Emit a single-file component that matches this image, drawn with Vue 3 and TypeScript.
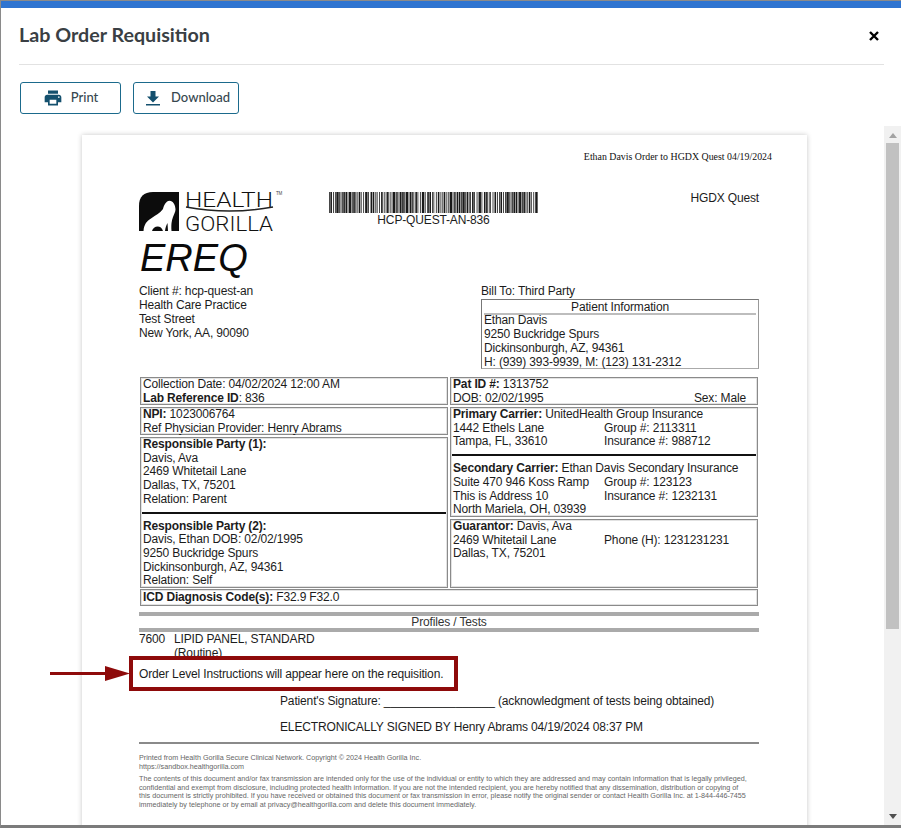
<template>
  <div class="modal">
    <div class="topbar"></div>
    <header class="head">
      <h1>Lab Order Requisition</h1>
      <button class="close" type="button" aria-label="Close">
        <svg viewBox="0 0 10 10" width="10" height="10"><path d="M1 1l8 8M9 1l-8 8" stroke="#000" stroke-width="2.4" /></svg>
      </button>
    </header>
    <div class="actions">
      <button class="btn print" type="button">
        <svg viewBox="0 0 24 24" width="20" height="20"><path d="M19 8H5c-1.66 0-3 1.34-3 3v6h4v4h12v-4h4v-6c0-1.66-1.34-3-3-3zm-3 11H8v-5h8v5zm3-7c-.55 0-1-.45-1-1s.45-1 1-1 1 .45 1 1-.45 1-1 1zm-1-9H6v4h12V3z" /></svg>
        <span class="label">Print</span>
      </button>
      <button class="btn download" type="button">
        <svg viewBox="0 0 14 15" width="14" height="15"><path d="M4.500 0h5v5.500H13L7 11.500 1 5.500h3.500zM0 13h14v1.500H0z" /></svg>
        <span class="label">Download</span>
      </button>
    </div>

    <div class="viewer">
      <div class="stage">
        <article class="doc">
          <div class="doc-title">Ethan Davis Order to HGDX Quest 04/19/2024</div>

          <div class="brand-row">
            <svg class="logo" viewBox="0 0 145 41" width="145" height="41">
              <path d="M1 40V15Q1 1 15 1H41V40Z" fill="#0c0c0c" />
              <path d="M5.500 40C6 33 9 30 13 27.500C18 24 22 22 25 18C26 14 28 10 31.500 9.700C35 9.700 37.500 14 37.500 18.500C37.500 21 36 23 35 26C34 29 33 32 33.500 40Z" fill="#fff" />
              <path d="M14 40C15 35 23 33 25 40ZM27 40C27.500 36 28.500 34 29.500 32L30 40Z" fill="#0c0c0c" />
              <text x="47" y="15.5" class="logo-word" textLength="88" lengthAdjust="spacingAndGlyphs">HEALTH</text>
              <path d="M48 16Q91 24 135 16" fill="none" stroke="#222" stroke-width="1.4" />
              <text x="47" y="39.5" class="logo-word" textLength="88" lengthAdjust="spacingAndGlyphs">GORILLA</text>
              <text x="138" y="4" class="logo-tm">TM</text>
            </svg>
            <div class="barcode">
              <svg viewBox="0 0 209 21" width="209" height="21" preserveAspectRatio="none">
                <rect v-for="(bar, i) in bars" :key="i" :x="bar.x" y="0" :width="bar.w" height="21" fill="#1a1a1a" />
              </svg>
              <div class="barcode-label">HCP-QUEST-AN-836</div>
            </div>
            <div class="lab-name">HGDX Quest</div>
          </div>

          <div class="ereq">EREQ</div>

          <div class="parties">
            <div class="client">
              <div>Client #: hcp-quest-an</div>
              <div>Health Care Practice</div>
              <div>Test Street</div>
              <div>New York, AA, 90090</div>
            </div>
            <div class="bill">
              <div class="bill-to">Bill To: Third Party</div>
              <div class="patient">
                <div class="patient-head">Patient Information</div>
                <div>Ethan Davis</div>
                <div>9250 Buckridge Spurs</div>
                <div>Dickinsonburgh, AZ, 94361</div>
                <div>H: (939) 393-9939, M: (123) 131-2312</div>
              </div>
            </div>
          </div>

          <div class="grid">
            <div class="col">
              <section class="cell h28">
                <div>Collection Date: 04/02/2024 12:00 AM</div>
                <div><b>Lab Reference ID</b>: 836</div>
              </section>
              <section class="cell h28">
                <div><b>NPI:</b> 1023006764</div>
                <div>Ref Physician Provider: Henry Abrams</div>
              </section>
              <section class="cell h151">
                <div><b>Responsible Party (1):</b></div>
                <div>Davis, Ava</div>
                <div>2469 Whitetail Lane</div>
                <div>Dallas, TX, 75201</div>
                <div>Relation: Parent</div>
                <hr class="black" />
                <div><b>Responsible Party (2):</b></div>
                <div>Davis, Ethan DOB: 02/02/1995</div>
                <div>9250 Buckridge Spurs</div>
                <div>Dickinsonburgh, AZ, 94361</div>
                <div>Relation: Self</div>
              </section>
            </div>
            <div class="col">
              <section class="cell h28">
                <div><b>Pat ID #:</b> 1313752</div>
                <div class="split"><span>DOB: 02/02/1995</span><span class="sex">Sex: Male</span></div>
              </section>
              <section class="cell h110">
                <div><b>Primary Carrier:</b> UnitedHealth Group Insurance</div>
                <div class="pair"><span>1442 Ethels Lane</span><span>Group #: 2113311</span></div>
                <div class="pair"><span>Tampa, FL, 33610</span><span>Insurance #: 988712</span></div>
                <hr class="black" />
                <div><b>Secondary Carrier:</b> Ethan Davis Secondary Insurance</div>
                <div class="pair"><span>Suite 470 946 Koss Ramp</span><span>Group #: 123123</span></div>
                <div class="pair"><span>This is Address 10</span><span>Insurance #: 1232131</span></div>
                <div>North Mariela, OH, 03939</div>
              </section>
              <section class="cell h69">
                <div><b>Guarantor:</b> Davis, Ava</div>
                <div class="pair"><span>2469 Whitetail Lane</span><span>Phone (H): 1231231231</span></div>
                <div>Dallas, TX, 75201</div>
              </section>
            </div>
            <section class="cell wide"><b>ICD Diagnosis Code(s):</b> F32.9 F32.0</section>
          </div>

          <div class="profiles">Profiles / Tests</div>
          <div class="test">
            <span class="code">7600</span>
            <span>LIPID PANEL, STANDARD<br />(Routine)</span>
          </div>

          <div class="instructions">
            Order Level Instructions will appear here on the requisition.
            <svg class="arrow" viewBox="0 0 80 15" width="80" height="15">
              <path d="M0 6H55V0L80 7.500 55 15V9H0Z" fill="#8e0a0a" />
            </svg>
          </div>

          <div class="signature">Patient's Signature: _________________ (acknowledgment of tests being obtained)</div>
          <div class="signed">ELECTRONICALLY SIGNED BY Henry Abrams 04/19/2024 08:37 PM</div>

          <footer class="fine">
            <p>Printed from Health Gorilla Secure Clinical Network. Copyright © 2024 Health Gorilla Inc.<br />https://sandbox.healthgorilla.com</p>
            <p>The contents of this document and/or fax transmission are intended only for the use of the individual or entity to which they are addressed and may contain information that is legally privileged,<br />confidential and exempt from disclosure, including protected health information. If you are not the intended recipient, you are hereby notified that any dissemination, distribution or copying of<br />this document is strictly prohibited. If you have received or obtained this document or fax transmission in error, please notify the original sender or contact Health Gorilla Inc. at 1-844-446-7455<br />immediately by telephone or by email at privacy@healthgorilla.com and delete this document immediately.</p>
          </footer>
        </article>
      </div>
      <div class="scrollbar">
        <span class="tri up"></span>
        <div class="track"><div class="thumb"></div></div>
        <span class="tri down"></span>
      </div>
    </div>
  </div>
</template>

<script setup lang="ts">
interface Bar {
  x: number
  w: number
}

// the barcode only has to look right, so the widths come from a small repeating pattern
const pattern = [1, 2, 1, 1, 3, 1, 1, 1, 2, 2, 1, 3, 1, 2, 1, 1, 2, 1, 1, 3, 1, 2, 2, 1, 1, 1, 2, 1]
const bars: Bar[] = []
let pos = 0
let n = 0
while (pos < 209) {
  const w = pattern[n % pattern.length] * 0.8
  bars.push({ x: pos, w: Math.min(w, 209 - pos) })
  pos += w + pattern[(n * 5 + 3) % pattern.length] * 0.55
  n++
}
</script>

<style>
html,
body {
  margin: 0;
  background: #fff;
}
</style>

<style scoped>
* {
  box-sizing: border-box;
}

.modal {
  width: 901px;
  height: 828px;
  display: flex;
  flex-direction: column;
  overflow: hidden;
  background: #fff;
  border-top: 1px solid #8a8a8a;
  border-left: 1px solid #8a8a8a;
  border-bottom: 3px solid #7b7b7b;
  font-family: Lato, "Liberation Sans", sans-serif;
}

.topbar {
  height: 7px;
  flex: none;
  background: #2f74d0;
}

.head {
  flex: none;
  height: 57px;
  margin: 0 17px 0 18px;
  display: flex;
  align-items: center;
  justify-content: space-between;
  border-bottom: 1px solid #e2e2e2;
}

h1 {
  margin: 0 0 4px;
  font-size: 19.700px;
  font-weight: 700;
  color: #3a3f44;
}

.close {
  display: flex;
  padding: 0;
  margin-right: 5px;
  margin-bottom: 1px;
  border: 0;
  background: none;
}

.actions {
  flex: none;
  height: 61px;
  padding: 17px 0 0 19px;
  display: flex;
  align-items: flex-start;
  gap: 12px;
}

.btn {
  height: 32px;
  padding: 0;
  display: flex;
  align-items: center;
  justify-content: center;
  background: #fff;
  border: 1px solid #1b6a8c;
  border-radius: 3px;
  font-family: inherit;
  font-size: 13px;
  font-weight: 500;
  color: #37474f;
}

.btn svg {
  fill: #14506e;
}

.label {
  margin-bottom: 2px;
}

.print {
  width: 101px;
  gap: 8px;
}

.download {
  width: 106px;
  padding-left: 4px;
  gap: 11px;
}

.viewer {
  flex: 1;
  min-height: 0;
  display: flex;
}

.stage {
  flex: 1;
  min-width: 0;
  overflow: hidden;
  padding: 9px 0 0 81px;
}

.doc {
  width: 725px;
  height: 760px;
  padding: 15px 48px 0 57px;
  background: #fff;
  box-shadow: 0 0 5px rgba(0, 0, 0, 0.22);
  font-family: "Liberation Sans", Arial, sans-serif;
  font-size: 12px;
  letter-spacing: -0.15px;
  line-height: 14px;
  color: #1c1c1c;
}

.doc-title {
  margin-right: -13px;
  text-align: right;
  font-family: "Liberation Serif", serif;
  font-size: 9.900px;
  letter-spacing: 0;
  color: #111;
}

.brand-row {
  display: flex;
  margin-top: 27px;
  margin-left: -1px;
}

.logo {
  flex: none;
  overflow: visible;
}

.logo-word {
  font-family: Roboto, "Open Sans", sans-serif;
  font-weight: 300;
  font-size: 20px;
  letter-spacing: 0;
  fill: #111;
}

.logo-tm {
  font-family: "Liberation Sans", sans-serif;
  font-size: 4.500px;
  fill: #444;
}

.barcode {
  margin-left: 46px;
  margin-top: 1px;
  width: 209px;
  text-align: center;
}

.barcode svg {
  display: block;
}

.barcode-label {
  margin-top: 1px;
  line-height: 13px;
}

.lab-name {
  margin-left: auto;
  line-height: 14px;
}

.ereq {
  margin-top: 6px;
  margin-left: 1px;
  font-style: italic;
  font-size: 38px;
  letter-spacing: 0;
  line-height: 40px;
  color: #0a0a0a;
}

.parties {
  display: flex;
  margin-top: 6px;
}

.client {
  width: 342px;
}

.bill {
  flex: 1;
}

.patient {
  width: 278px;
  height: 70px;
  margin-top: 1px;
  padding: 0 2px;
  border: 1px solid #777;
  border-bottom-color: #aaa;
  border-right-color: #999;
}

.patient-head {
  height: 15px;
  margin-bottom: -2px;
  text-align: center;
  border-bottom: 2px solid #bdbdbd;
  line-height: 14px;
}

.grid {
  display: grid;
  grid-template-columns: 308px 308px;
  column-gap: 2px;
  row-gap: 1px;
  margin: 8px 0 0 1px;
}

.col {
  display: flex;
  flex-direction: column;
  gap: 2px;
}

.cell {
  padding: 0 2px;
  border: 1px solid #8a8a8a;
  outline: 1px solid #e2e2e2;
  outline-offset: -2px;
  line-height: 13.700px;
}

.h28 {
  height: 28px;
}

.h151 {
  height: 151px;
}

.h110 {
  height: 110px;
}

.h69 {
  height: 69px;
}

.wide {
  grid-column: 1 / 3;
  height: 17px;
  line-height: 15px;
}

.split {
  display: flex;
  justify-content: space-between;
}

.sex {
  margin-right: 9px;
}

.pair {
  display: grid;
  grid-template-columns: 151px 1fr;
}

.black {
  height: 2px;
  margin: 5px -1px 6px;
  border: 0;
  background: #111;
}

.profiles {
  width: 620px;
  height: 20px;
  margin-top: 6px;
  text-align: center;
  border-top: 4px solid #aaa;
  border-bottom: 4px solid #aaa;
  line-height: 12px;
  color: #333;
}

.test {
  display: flex;
}

.code {
  width: 35px;
}

.instructions {
  position: relative;
  width: 329px;
  height: 35px;
  margin: -4px 0 0 -10px;
  padding-left: 6px;
  display: flex;
  align-items: center;
  background: #fff;
  border: 4px solid #8e0a0a;
}

/* red pointer sits outside the page edge, on top of the viewer */
.arrow {
  position: absolute;
  left: -83px;
  top: 6px;
}

.signature {
  margin-top: 3px;
  margin-left: 141px;
  white-space: nowrap;
}

.signed {
  margin-top: 12px;
  margin-left: 141px;
}

.fine {
  margin-top: 8px;
  padding-top: 10px;
  border-top: 2px solid #8a8a8a;
  font-size: 7.200px;
  letter-spacing: 0;
  line-height: 8.500px;
  color: #666;
  white-space: nowrap;
}

.fine p {
  margin: 0 0 4px;
}

.scrollbar {
  width: 17px;
  flex: none;
  display: flex;
  flex-direction: column;
  align-items: center;
  background: #f1f1f1;
}

.track {
  flex: 1;
  width: 100%;
  padding: 0 2px;
}

.thumb {
  height: 486px;
  background: #c1c1c1;
}

.tri {
  flex: none;
  width: 0;
  height: 0;
  border-left: 4px solid transparent;
  border-right: 4px solid transparent;
}

.up {
  margin: 7px 0 5px;
  border-bottom: 5px solid #a3a3a3;
}

.down {
  margin: 5px 0 6px;
  border-top: 5px solid #505050;
}
</style>
